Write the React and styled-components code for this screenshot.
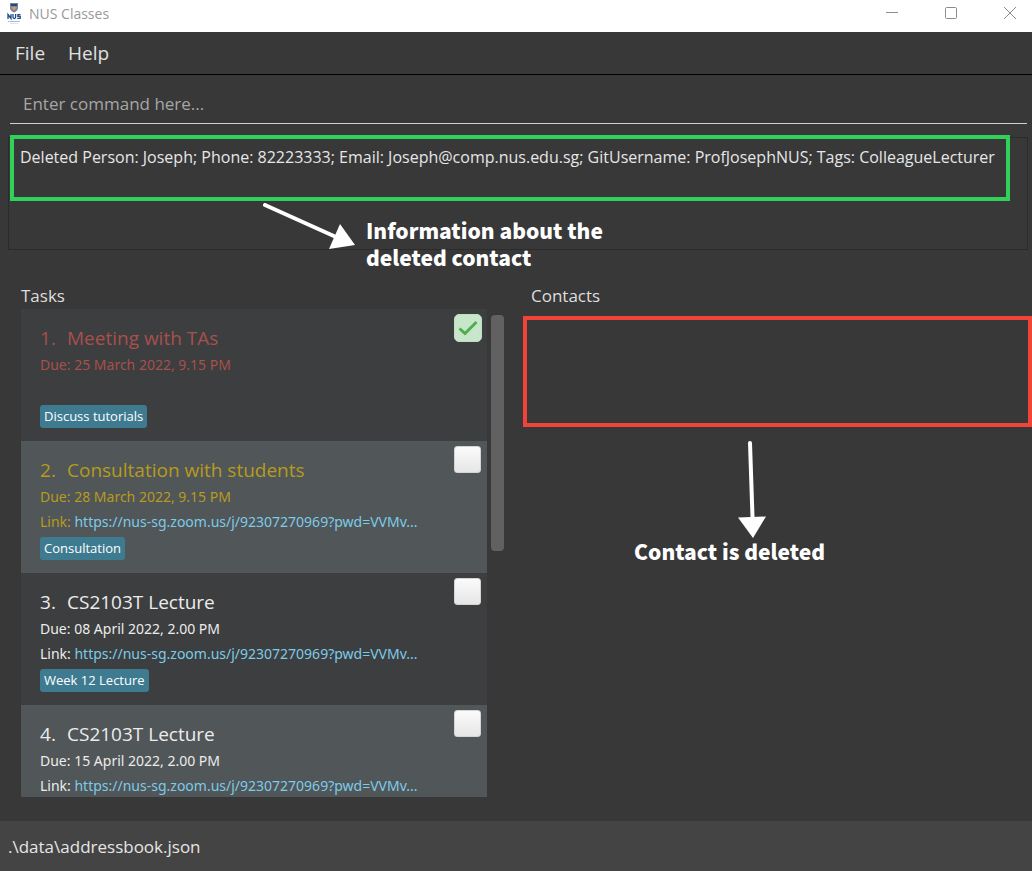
import React from "react";
import styled, { createGlobalStyle, css } from "styled-components";

const GlobalStyle = createGlobalStyle`
  *, *::before, *::after { box-sizing: border-box; }
  body { margin: 0; background: #383838; }
  button, input { font: inherit; }
  h2, h3, p, ul { margin: 0; padding: 0; font-weight: inherit; }
`;

const Window = styled.div`
  display: flex;
  flex-direction: column;
  height: 100vh;
  overflow: hidden;
  background: #383838;
  color: #e6e6e6;
  font-family: "Open Sans", "Noto Sans", sans-serif;
  font-size: 16px;
`;

const TitleBar = styled.header`
  flex: none;
  display: flex;
  align-items: center;
  height: 32px;
  padding-left: 6px;
  background: #fff;
  color: #999;
`;

const AppIcon = styled.svg`
  width: 16px;
  height: 22px;
  margin: 0 7px 6px 0;
`;

const AppName = styled.span`
  flex: 1;
  padding-bottom: 4px;
  font-size: 14px;
  line-height: 20px;
`;

const WindowControls = styled.div`
  display: flex;
  gap: 15px;
`;

const WindowButton = styled.button`
  display: flex;
  align-items: center;
  justify-content: center;
  width: 44px;
  height: 32px;
  padding: 0 0 6px;
  border: 0;
  background: none;
  color: #8c8c8c;
`;

const MenuBar = styled.nav`
  flex: none;
  display: flex;
  gap: 23px;
  height: 43px;
  padding: 0 15px;
  border-bottom: 1px solid #000;
`;

const MenuButton = styled.button`
  padding: 0;
  border: 0;
  background: none;
  color: #e0e0e0;
  font-size: 19px;
`;

const CommandInput = styled.input`
  flex: none;
  height: 49px;
  margin: 0 5px 0 10px;
  padding: 8px 13px 0;
  border: 0;
  border-bottom: 1px solid #cfcfcf;
  outline: 0;
  background: transparent;
  color: #ececec;
  font-size: 17px;
  &::placeholder { color: #a6a6a6; opacity: 1; }
`;

const ResultBox = styled.section`
  position: relative;
  flex: none;
  height: 113px;
  margin: 13px 4px 0 8px;
  padding: 7px 11px;
  border: 1px solid #2b2b2b;
`;

const ResultText = styled.output`
  display: block;
  line-height: 24px;
  white-space: nowrap;
`;

const ResultHighlight = styled.div`
  position: absolute;
  top: -3px;
  left: 1px;
  right: 17px;
  height: 66px;
  border: 4px solid #30d158;
`;

const ResultNote = styled.div`
  position: absolute;
  top: 65px;
  left: 253px;
  display: flex;
  z-index: 1;
`;

const NoteText = styled.p`
  color: #fff;
  font-family: "Noto Sans CJK SC", "Open Sans", sans-serif;
  font-weight: 900;
  font-size: 21px;
  line-height: 27px;
  white-space: nowrap;
`;

const ResultNoteText = styled(NoteText)`
  padding: 14px 0 0 11px;
`;

const Panels = styled.main`
  flex: 1;
  min-height: 0;
  display: grid;
  grid-template-columns: 1fr 1fr;
  grid-template-rows: minmax(0, 1fr);
  padding: 32px 0 24px;
`;

const TaskPanel = styled.section`
  display: flex;
  flex-direction: column;
  min-height: 0;
  padding: 0 12px 0 21px;
`;

const ContactPanel = styled.section`
  padding-left: 7px;
`;

const PanelTitle = styled.h2`
  flex: none;
  padding-left: ${(p) => (p.$inset ? "8px" : "0")};
  font-size: 17px;
  line-height: 27px;
  color: #dedede;
`;

const TaskArea = styled.div`
  flex: 1;
  min-height: 0;
  display: flex;
  gap: 4px;
`;

const TaskList = styled.ul`
  flex: 1;
  min-width: 0;
  overflow: hidden;
  list-style: none;
`;

const ScrollTrack = styled.div`
  width: 13px;
  padding-top: 6px;
`;

const ScrollThumb = styled.div`
  height: 49%;
  border-radius: 4px;
  background: #616161;
`;

const tones = { overdue: "#a8504b", soon: "#b79b1c", normal: "#ececec" };

const TaskCell = styled.li`
  display: flex;
  justify-content: space-between;
  height: 132px;
  padding: 15px 5px 0 19px;
  background: #3c3e3f;
  color: ${(p) => tones[p.$tone]};
  &:nth-child(even) { background: #515658; }
`;

const TaskBody = styled.div`
  min-width: 0;
`;

const TaskName = styled.h3`
  display: flex;
  font-size: 19px;
  line-height: 28px;
  white-space: nowrap;
`;

const TaskNumber = styled.span`
  width: 27px;
`;

const TaskLine = styled.p`
  height: ${(p) => (p.$link ? "24px" : "26px")};
  font-family: "Noto Sans", "Open Sans", sans-serif;
  font-size: 14px;
  line-height: ${(p) => (p.$link ? "24px" : "26px")};
  white-space: nowrap;
`;

const TaskLink = styled.a`
  color: #7ccbe8;
  text-decoration: none;
`;

const Tag = styled.span`
  display: inline-block;
  margin-top: 3px;
  padding: 0 4px;
  border-radius: 3px;
  background: #3e7b91;
  color: #fff;
  font-size: 13px;
  line-height: 23px;
  white-space: nowrap;
`;

const Tick = styled.label`
  display: grid;
  flex: none;
  width: 28px;
  height: 28px;
  margin-top: -10px;
  & > * { grid-area: 1 / 1; }
`;

const TickBox = styled.input.attrs({ type: "checkbox" })`
  appearance: none;
  width: 27px;
  height: 27px;
  margin: 0;
  border: 1px solid #d4d4d4;
  border-radius: 3px;
  background: linear-gradient(#fbfbfb, #e6e6e6);
  ${(p) =>
    p.defaultChecked &&
    css`
      width: 28px;
      height: 28px;
      border-color: #bfe0c1;
      border-radius: 5px;
      background: #c8e6c9;
    `}
`;

const TickMark = styled.svg`
  place-self: center;
  width: 20px;
  height: 16px;
  pointer-events: none;
`;

const ContactList = styled.div`
  height: 111px;
  margin-top: 7px;
  border: 4px solid #f04438;
`;

const ContactNote = styled.div`
  position: relative;
`;

const ContactNoteBody = styled.div`
  position: absolute;
  top: 12px;
  left: 111px;
  display: flex;
  flex-direction: column;
`;

const ContactArrow = styled.svg`
  display: block;
  margin-left: 103px;
`;

const StatusBar = styled.footer`
  flex: none;
  height: 50px;
  padding: 0 8px;
  background: #444;
  font-size: 17px;
  line-height: 52px;
`;

const zoomLink = "https://nus-sg.zoom.us/j/92307270969?pwd=VVMv...";

const tasks = [
  { name: "Meeting with TAs", due: "25 March 2022, 9.15 PM", tag: "Discuss tutorials", tone: "overdue", done: true },
  { name: "Consultation with students", due: "28 March 2022, 9.15 PM", link: zoomLink, tag: "Consultation", tone: "soon" },
  { name: "CS2103T Lecture", due: "08 April 2022, 2.00 PM", link: zoomLink, tag: "Week 12 Lecture", tone: "normal" },
  { name: "CS2103T Lecture", due: "15 April 2022, 2.00 PM", link: zoomLink, tone: "normal" },
];

function Task({ index, task }) {
  return (
    <TaskCell $tone={task.tone}>
      <TaskBody>
        <TaskName>
          <TaskNumber>{index}.</TaskNumber>
          {task.name}
        </TaskName>
        <TaskLine>Due: {task.due}</TaskLine>
        <TaskLine $link>
          {task.link && (
            <>
              Link: <TaskLink href="#zoom">{task.link}</TaskLink>
            </>
          )}
        </TaskLine>
        {task.tag && <Tag>{task.tag}</Tag>}
      </TaskBody>
      <Tick>
        <TickBox defaultChecked={task.done} aria-label={`${task.name} done`} />
        {task.done && (
          <TickMark viewBox="0 0 20 16" fill="none" stroke="#4caf50" strokeWidth="3">
            <path d="M1.5 8.5 7 13.5 18.5 2" />
          </TickMark>
        )}
      </Tick>
    </TaskCell>
  );
}

export default function App() {
  return (
    <Window>
      <GlobalStyle />
      <TitleBar>
        <AppIcon viewBox="0 0 16 22" aria-hidden="true">
          <path d="M4 1h8v5c0 2-2 3.500-4 4.500C6 9.500 4 8 4 6z" fill="#6f83a3" />
          <path d="M5 2h6v2H5z" fill="#27476f" />
          <path d="M5 5.500 8 4.500l3 1-3 3z" fill="#d39a62" />
          <g fill="none" stroke="#1f4d86" strokeWidth="1.300">
            <path d="M2 17v-4.500l3 4V12" />
            <path d="M7 12v3q0 1.500 1.300 1.500T9.600 15v-3" />
            <path d="M14.500 12.700h-2.600v1.700h2.300v2h-3" />
          </g>
          <path d="M2 19.500h12" stroke="#a9c0da" />
          <path d="M4 21.500h8" stroke="#e3e3e3" />
        </AppIcon>
        <AppName>NUS Classes</AppName>
        <WindowControls>
          <WindowButton aria-label="Minimize">
            <svg width="14" height="14" fill="none" stroke="currentColor"><path d="M1 6.500h12" /></svg>
          </WindowButton>
          <WindowButton aria-label="Maximize">
            <svg width="14" height="14" fill="none" stroke="currentColor"><rect x="1.500" y="1.500" width="11" height="11" rx="1" /></svg>
          </WindowButton>
          <WindowButton aria-label="Close">
            <svg width="14" height="14" fill="none" stroke="currentColor"><path d="M1 1l12 12M13 1 1 13" /></svg>
          </WindowButton>
        </WindowControls>
      </TitleBar>

      <MenuBar>
        <MenuButton>File</MenuButton>
        <MenuButton>Help</MenuButton>
      </MenuBar>

      <CommandInput type="text" aria-label="Command" placeholder="Enter command here..." />

      <ResultBox>
        <ResultText>
          Deleted Person: Joseph; Phone: 82223333; Email: Joseph@comp.nus.edu.sg; GitUsername: ProfJosephNUS; Tags: ColleagueLecturer
        </ResultText>
        <ResultHighlight />
        <ResultNote>
          <svg width="93" height="48" aria-hidden="true">
            <path d="M3 2 74 34" stroke="#fff" strokeWidth="4" strokeLinecap="round" />
            <path d="M78 21 93 42 67 46z" fill="#fff" />
          </svg>
          <ResultNoteText>
            Information about the
            <br />
            deleted contact
          </ResultNoteText>
        </ResultNote>
      </ResultBox>

      <Panels>
        <TaskPanel>
          <PanelTitle>Tasks</PanelTitle>
          <TaskArea>
            <TaskList>
              {tasks.map((task, i) => (
                <Task key={i} index={i + 1} task={task} />
              ))}
            </TaskList>
            <ScrollTrack>
              <ScrollThumb />
            </ScrollTrack>
          </TaskArea>
        </TaskPanel>
        <ContactPanel>
          <PanelTitle $inset>Contacts</PanelTitle>
          <ContactList />
          <ContactNote>
            <ContactNoteBody>
              <ContactArrow width="30" height="99" aria-hidden="true">
                <path d="M13 4 15.500 78" stroke="#fff" strokeWidth="4" strokeLinecap="round" />
                <path d="M1 78.500 29 77.500 16 99z" fill="#fff" />
              </ContactArrow>
              <NoteText>Contact is deleted</NoteText>
            </ContactNoteBody>
          </ContactNote>
        </ContactPanel>
      </Panels>

      <StatusBar>.\data\addressbook.json</StatusBar>
    </Window>
  );
}
